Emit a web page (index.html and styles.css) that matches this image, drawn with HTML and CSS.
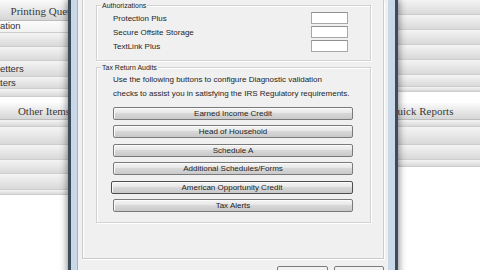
FILE: index.html
```html
<!DOCTYPE html>
<html lang="en">

<head>
    <meta charset="UTF-8">
    <meta name="viewport" content="width=device-width, initial-scale=1.0">
    <title>Audit Options</title>
    <link rel="stylesheet" href="styles.css">
</head>

<body>
    <div id="app">
        <div class="col col-left">
            <div class="col-head">Printing Queue</div>
            <div class="item item-sel item-12 item-text-sm">ation</div>
            <div class="item item-14"></div>
            <div class="item item-14"></div>
            <div class="item item-16">etters</div>
            <div class="item item-12">ters</div>
            <div class="item item-8"></div>
            <div class="col-gap"></div>
            <div class="col-head col-head-sm">Other Items</div>
            <div class="item item-7"></div>
            <div class="item item-18"></div>
            <div class="item item-15"></div>
            <div class="item item-14"></div>
            <div class="item item-16"></div>
            <div class="item item-5"></div>
        </div>
        <div class="col col-mid"></div>
        <div class="col col-right">
            <div class="item item-15"></div>
            <div class="item item-15"></div>
            <div class="item item-15"></div>
            <div class="item item-15"></div>
            <div class="item item-15"></div>
            <div class="item item-12"></div>
            <div class="item item-5"></div>
            <div class="col-gap col-gap-lg"></div>
            <div class="col-head col-head-sm">Quick Reports</div>
            <div class="item item-7"></div>
            <div class="item item-18"></div>
            <div class="item item-15"></div>
            <div class="item item-7"></div>
        </div>
    </div>

    <div id="dialog">
        <div class="client">
            <div class="page">
                <div class="group group-auth">
                    <span class="legend">Authorizations</span>
                    <div class="field"><span>Protection Plus</span><input class="box" type="text"></div>
                    <div class="field"><span>Secure Offsite Storage</span><input class="box" type="text"></div>
                    <div class="field"><span>TextLink Plus</span><input class="box" type="text"></div>
                </div>
                <div class="group group-audit">
                    <span class="legend">Tax Return Audits</span>
                    <p class="note">Use the following buttons to configure Diagnostic validation<br>checks to assist you in satisfying the IRS Regulatory requirements.</p>
                    <div class="audit-buttons">
                        <button class="audit">Earned Income Credit</button>
                        <button class="audit">Head of Household</button>
                        <button class="audit">Schedule A</button>
                        <button class="audit">Additional Schedules/Forms</button>
                        <button class="audit audit-hot">American Opportunity Credit</button>
                        <button class="audit">Tax Alerts</button>
                    </div>
                </div>
            </div>
            <div class="footer">
                <button class="cmd cmd-ok">OK</button>
                <button class="cmd">Cancel</button>
            </div>
        </div>
    </div>
</body>

</html>
```

FILE: styles.css
```css
* {
    box-sizing: border-box;
}

body {
    margin: 0;
    width: 480px;
    height: 270px;
    overflow: hidden;
    position: relative;
    background: #ffffff;
    font-family: "Liberation Sans", Arial, sans-serif;
}

/* application behind the dialog */
#app {
    display: grid;
    grid-template-columns: 91px 1fr 110px;
    height: 270px;
}

.col-head {
    height: 21px;
    line-height: 22px;
    text-align: center;
    white-space: nowrap;
    font-family: "Liberation Serif", "Times New Roman", serif;
    font-size: 11px;
    color: #3a3a3a;
    background: linear-gradient(#fbfbfb, #e6e6e6 55%, #d6d6d6);
    border-bottom: 1px solid #bcbcbc;
}

.col-head-sm {
    height: 17px;
    line-height: 17px;
}

.col-left .col-head {
    padding-right: 3px;
}

.col-right .col-head {
    padding-right: 7px;
}

.col-gap {
    height: 6px;
}

.col-gap-lg {
    height: 11px;
}

.item {
    font-size: 9.5px;
    color: #333333;
    white-space: nowrap;
    background: linear-gradient(#f4f4f4, #e4e4e4 60%, #d9d9d9);
    border-bottom: 1px solid #cdcdcd;
}

.item-sel {
    background: linear-gradient(#fbfbfb, #f1f1f1);
}

.item-5 { height: 5px; }
.item-7 { height: 7px; }
.item-8 { height: 8px; }
.item-12 { height: 12px; line-height: 12px; }
.item-14 { height: 14px; }
.item-15 { height: 15px; }
.item-16 { height: 16px; line-height: 16px; }
.item-18 { height: 18px; }

.item-text-sm {
    line-height: 10px;
}

/* dialog window */
#dialog {
    position: absolute;
    left: 68px;
    top: 0;
    width: 330px;
    height: 300px;
    border-left: 3px solid #3e4b5a;
    border-right: 3px solid #3e4b5a;
    padding: 0 7px 0 6px;
    background: linear-gradient(90deg, #c9d8e8, #dbe6f1 50%, #c9d8e8);
    box-shadow: 0 0 7px 1px rgba(0, 0, 0, 0.45);
    font-size: 8px;
    color: #1e1e1e;
}

.client {
    height: 100%;
    background: #f0f0f0;
    border-left: 1px solid #a3b1c0;
    padding: 0 4px;
}

.page {
    border: 1px solid #cbcbcb;
    border-top: none;
    padding: 5px 12px 35px 13px;
    box-shadow: 1px 1px 0 #ffffff, inset 1px 0 0 #ffffff;
}

.group {
    position: relative;
    border: 1px solid #d2d2d2;
    box-shadow: inset 1px 1px 0 #ffffff, 1px 1px 0 #ffffff;
}

.legend {
    position: absolute;
    top: -5px;
    left: 4px;
    padding: 0 1px;
    font-size: 7px;
    line-height: 9px;
    background: #f0f0f0;
    white-space: nowrap;
}

.group-auth {
    padding: 6px 22px 8px 16px;
    display: flex;
    flex-direction: column;
    gap: 2px;
}

.field {
    display: flex;
    justify-content: space-between;
    align-items: center;
    height: 12px;
}

.field span {
    padding-top: 1px;
    line-height: 12px;
}

.box {
    width: 37px;
    height: 12px;
    margin: 0;
    padding: 0;
    border: 1px solid #a7a7a7;
    border-top-color: #8e8f8f;
    background: #ffffff;
}

.group-audit {
    margin-top: 6px;
    padding: 5px 17px 10px 16px;
}

.note {
    margin: 0;
    line-height: 14px;
    white-space: nowrap;
}

.audit-buttons {
    margin-top: 6px;
    display: flex;
    flex-direction: column;
    gap: 5.4px;
}

.audit {
    width: 240px;
    height: 13px;
    margin: 0;
    padding: 0;
    font: inherit;
    line-height: 11px;
    color: #1e1e1e;
    border: 1px solid #7a7a7a;
    border-radius: 2px;
    background: linear-gradient(#f3f3f3, #e9e9e9 40%, #d8d8d8 50%, #c9c9c9);
    box-shadow: inset 1px 1px 0 #fbfbfb;
}

.audit-hot {
    width: 242px;
    margin-left: -2px;
    border-color: #4f4f4f;
}

.footer {
    display: flex;
    justify-content: flex-end;
    gap: 6px;
    margin-top: 7px;
}

.cmd {
    width: 50px;
    height: 20px;
    margin: 0;
    padding: 0;
    font: inherit;
    color: #1e1e1e;
    border: 1px solid #7a7a7a;
    border-radius: 2px;
    background: linear-gradient(#f3f3f3, #ebebeb 45%, #dcdcdc 50%, #cdcdcd);
}

.cmd-ok {
    width: 51px;
}
```
